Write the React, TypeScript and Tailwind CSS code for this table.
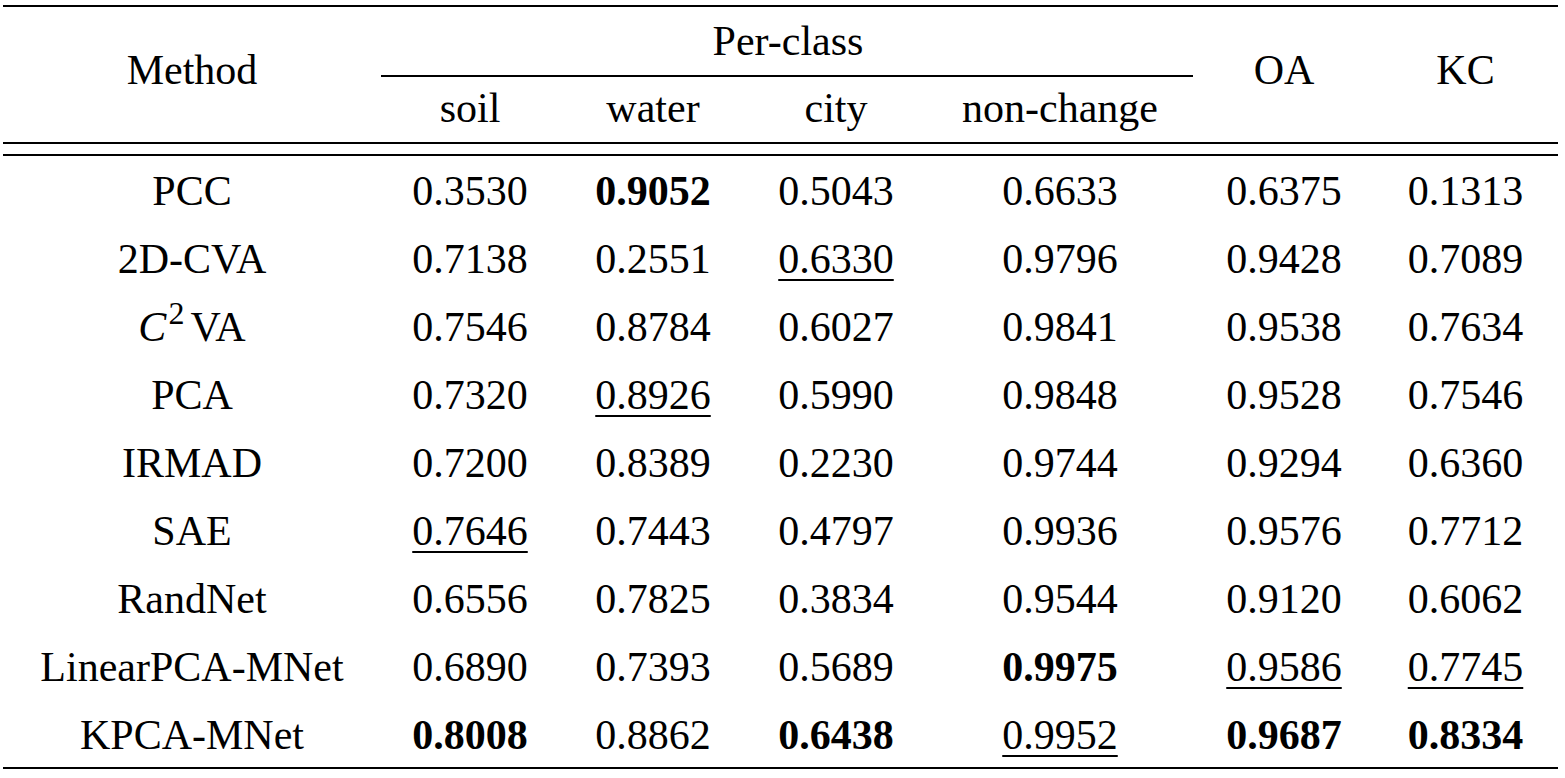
import React from 'react';

type Cell = { v: string; b?: boolean; u?: boolean };

const rows: { name: React.ReactNode; cells: Cell[] }[] = [
  { name: 'PCC', cells: [{ v: '0.3530' }, { v: '0.9052', b: true }, { v: '0.5043' }, { v: '0.6633' }, { v: '0.6375' }, { v: '0.1313' }] },
  { name: '2D-CVA', cells: [{ v: '0.7138' }, { v: '0.2551' }, { v: '0.6330', u: true }, { v: '0.9796' }, { v: '0.9428' }, { v: '0.7089' }] },
  {
    name: (
      <>
        <i>C</i>
        <sup className="text-[32px] -top-[17px] ml-[2px] mr-[6px]">2</sup>VA
      </>
    ),
    cells: [{ v: '0.7546' }, { v: '0.8784' }, { v: '0.6027' }, { v: '0.9841' }, { v: '0.9538' }, { v: '0.7634' }],
  },
  { name: 'PCA', cells: [{ v: '0.7320' }, { v: '0.8926', u: true }, { v: '0.5990' }, { v: '0.9848' }, { v: '0.9528' }, { v: '0.7546' }] },
  { name: 'IRMAD', cells: [{ v: '0.7200' }, { v: '0.8389' }, { v: '0.2230' }, { v: '0.9744' }, { v: '0.9294' }, { v: '0.6360' }] },
  { name: 'SAE', cells: [{ v: '0.7646', u: true }, { v: '0.7443' }, { v: '0.4797' }, { v: '0.9936' }, { v: '0.9576' }, { v: '0.7712' }] },
  { name: 'RandNet', cells: [{ v: '0.6556' }, { v: '0.7825' }, { v: '0.3834' }, { v: '0.9544' }, { v: '0.9120' }, { v: '0.6062' }] },
  { name: 'LinearPCA-MNet', cells: [{ v: '0.6890' }, { v: '0.7393' }, { v: '0.5689' }, { v: '0.9975', b: true }, { v: '0.9586', u: true }, { v: '0.7745', u: true }] },
  { name: 'KPCA-MNet', cells: [{ v: '0.8008', b: true }, { v: '0.8862' }, { v: '0.6438', b: true }, { v: '0.9952', u: true }, { v: '0.9687', b: true }, { v: '0.8334', b: true }] },
];

const cols = 'grid grid-cols-[378px_178px_188px_178px_270px_178px_185px]';

export default function App() {
  return (
    <div className="w-[1565px] h-[778px] bg-white text-black overflow-hidden font-['Liberation_Serif','Times_New_Roman',serif] text-[42px]">
      <div className="pt-[5px] pl-[3px] w-[1558px]">
        {/* top rule */}
        <div className="h-[2px] bg-black" />

        {/* header */}
        <div className={`${cols} grid-rows-[68px_2px_65px] text-center`}>
          <div className="row-span-3 leading-[126px]">Method</div>
          <div className="col-span-4 leading-[68px]">Per-class</div>
          <div className="row-span-3 leading-[126px]">OA</div>
          <div className="row-span-3 leading-[126px]">KC</div>
          <div className="col-span-4 bg-black mr-[2px]" />
          <div className="leading-[62px]">soil</div>
          <div className="leading-[62px]">water</div>
          <div className="leading-[62px]">city</div>
          <div className="leading-[62px]">non-change</div>
        </div>

        {/* double rule */}
        <div className="h-[2px] bg-black" />
        <div className="h-[10px]" />
        <div className="h-[2px] bg-black" />

        {/* body */}
        <div className="pt-[1px]">
          {rows.map((r, i) => (
            <div key={i} className={`${cols} h-[68px] leading-[68px] text-center`}>
              <div>{r.name}</div>
              {r.cells.map((c, j) => (
                <div key={j}>
                  <span
                    className={`${c.b ? 'font-bold' : ''} ${c.u ? 'underline decoration-2 underline-offset-[6px]' : ''}`}
                  >
                    {c.v}
                  </span>
                </div>
              ))}
            </div>
          ))}
        </div>

        {/* bottom rule */}
        <div className="-mt-[2px] h-[2px] bg-black" />
      </div>
    </div>
  );
}
